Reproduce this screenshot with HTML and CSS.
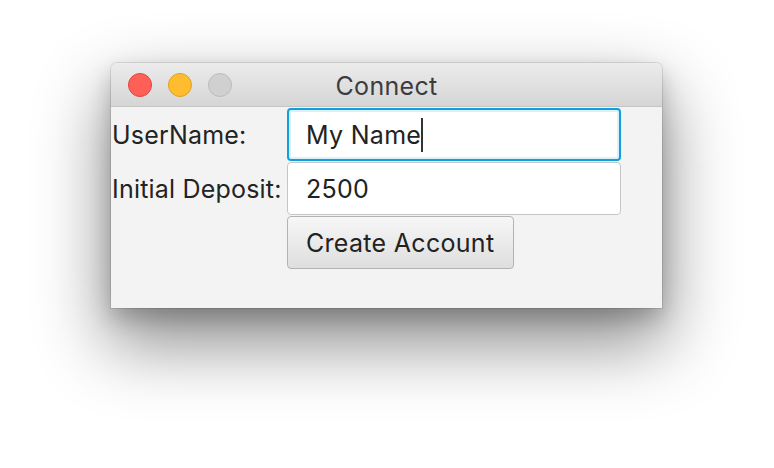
FILE: index.html
```html
<!DOCTYPE html>
<html>
<head>
<meta charset="utf-8">
<link rel="stylesheet" href="styles.css">
</head>
<body>
<div class="window">
  <div class="titlebar">
    <div class="lights">
      <span class="light red"></span>
      <span class="light yellow"></span>
      <span class="light gray"></span>
    </div>
    <div class="title">Connect</div>
  </div>
  <div class="content">
    <div class="form">
      <label class="label">UserName:</label>
      <div class="field focused"><span class="value">My Name</span><span class="caret"></span></div>
      <label class="label">Initial Deposit:</label>
      <div class="field"><span class="value">2500</span></div>
      <span></span>
      <div class="btnrow"><button class="button">Create Account</button></div>
    </div>
  </div>
</div>
</body>
</html>
```

FILE: styles.css
```css
html, body {
  margin: 0;
  padding: 0;
  background: #ffffff;
}
html {
  height: 100%;
}
body {
  min-height: 100%;
  box-sizing: border-box;
  padding: 63px 0 0 111px;
  font-family: "Inter", "Liberation Sans", sans-serif;
  color: #232323;
}
.window {
  width: 551px;
  height: 245px;
  background: #f3f3f3;
  border-radius: 6px 6px 0 0;
  box-shadow: 0 32px 70px 4px rgba(0,0,0,0.45), 0 10px 22px rgba(0,0,0,0.2), 0 0 0 1px rgba(0,0,0,0.1);
  display: flex;
  flex-direction: column;
  overflow: hidden;
}
.titlebar {
  height: 43px;
  flex: none;
  background: linear-gradient(#ececec, #d5d5d5);
  border-bottom: 1px solid #c6c6c6;
  display: flex;
  align-items: center;
  position: relative;
}
.lights {
  display: flex;
  gap: 16px;
  padding-left: 17px;
  padding-top: 1px;
}
.light {
  width: 24px;
  height: 24px;
  border-radius: 50%;
  box-sizing: border-box;
}
.red { background: #fe5f57; border: 1px solid #e0443e; }
.yellow { background: #febc2e; border: 1px solid #dea123; }
.gray { background: #d0d0d0; border: 1px solid #bcbcbc; }
.title {
  position: absolute;
  left: 0;
  right: 0;
  top: 0;
  bottom: 0;
  display: flex;
  align-items: center;
  justify-content: center;
  font-size: 25px;
  letter-spacing: 0.3px;
  color: #3c3c3c;
  padding-top: 2px;
}
.content {
  flex: 1;
  padding: 1px 0 0 1px;
}
.form {
  display: grid;
  grid-template-columns: 175px 334px;
  grid-auto-rows: 53px;
  row-gap: 1px;
  align-items: center;
}
.label {
  font-size: 25px;
  letter-spacing: 0.2px;
  color: #232323;
  white-space: nowrap;
}
.field {
  height: 53px;
  box-sizing: border-box;
  background: #ffffff;
  border: 1px solid #c6c6c6;
  border-radius: 4px;
  display: flex;
  align-items: center;
  padding-left: 18px;
  font-size: 25px;
  letter-spacing: 0.3px;
  color: #222222;
}
.field.focused {
  border: 2px solid #0f9fdc;
  padding-left: 17px;
  box-shadow: inset 0 0 0 2px #dcf0fa;
}
.caret {
  width: 2px;
  height: 34px;
  background: #333;
}
.btnrow {
  display: flex;
}
.button {
  height: 53px;
  box-sizing: border-box;
  padding: 0 19px 0 18px;
  font-family: inherit;
  font-size: 25px;
  letter-spacing: 0.3px;
  color: #222222;
  background: linear-gradient(#f7f7f7, #dedede);
  border: 1px solid #b3b3b3;
  border-radius: 4px;
}
```
